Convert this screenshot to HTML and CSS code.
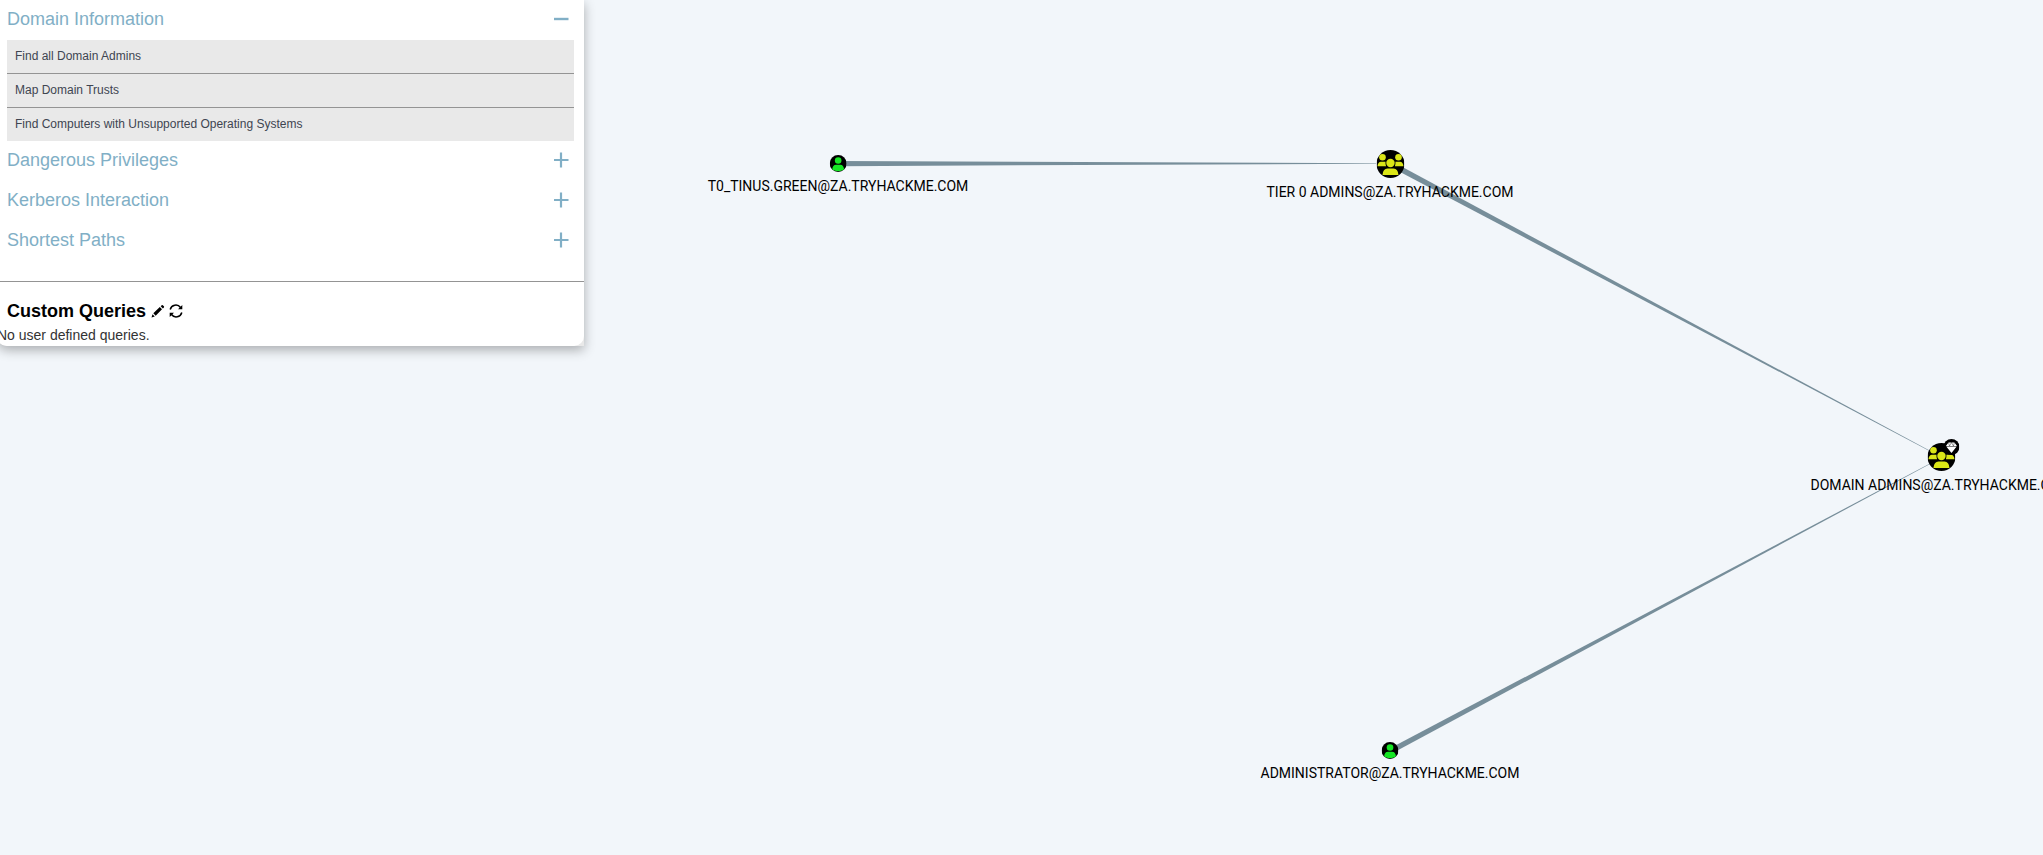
FILE: index.html
```html
<!DOCTYPE html>
<html lang="en">
<head>
<meta charset="utf-8">
<title>Domain graph</title>
<link rel="stylesheet" href="styles.css">
</head>
<body>
<svg class="defs" width="0" height="0" aria-hidden="true">
  <symbol id="user" viewBox="-10 -10 20 20">
    <circle r="10" fill="#000"/>
    <circle cy="-3.500" r="3.900" fill="#17e625"/>
    <path d="M-7 7.200Q-6.500 1.500-2.500 1.500H2.500Q6.500 1.500 7 7.200Q3.500 9 0 9Q-3.500 9-7 7.200Z" fill="#17e625"/>
  </symbol>
  <symbol id="group" viewBox="-14 -14 28 28">
    <circle r="14" fill="#000"/>
    <g fill="#dbe617">
      <circle cx="-8" cy="-6.800" r="3.300"/>
      <circle cx="8" cy="-6.800" r="3.300"/>
      <path d="M-13 2.300Q-12.500-2.300-9.500-2.300H-5Q-5.200 0-4.400 2.300ZM13 2.300Q12.500-2.300 9.500-2.300H5Q5.200 0 4.400 2.300Z"/>
      <circle cy="-1" r="4.200"/>
      <path d="M-8 11Q-7.500 4.500-3 4.500H3Q7.500 4.500 8 11Z"/>
    </g>
  </symbol>
  <symbol id="gem" viewBox="-8 -8 16 16">
    <circle r="8" fill="#000"/>
    <path d="M-3-4.500H3L5.500-1H-5.500ZM-5.200-.4H5.200L0 6Z" fill="#fff"/>
    <path d="M-3-4.500-2-1 0-4.500 2-1 3-4.500" fill="none" stroke="#000" stroke-width=".4"/>
  </symbol>
  <symbol id="plus" viewBox="0 0 16 16"><path d="M8 .5V15.500M1 8H15.500" fill="none" stroke="currentColor" stroke-width="2.200"/></symbol>
  <symbol id="minus" viewBox="0 0 16 16"><path d="M1 8H15.500" fill="none" stroke="currentColor" stroke-width="2.400"/></symbol>
</svg>

<main class="graph">
  <svg class="edges" aria-hidden="true">
    <g fill="#778e9a">
      <path d="M838 161L1376 163.200V163.700L838 166.200Z"/>
      <path d="M1391.300 161.100L1930 450.800L1929.900 451.200L1388.700 165.900Z"/>
      <path d="M1388.700 749L1929.900 463.600L1930 464L1391.300 753.800Z"/>
    </g>
  </svg>
  <div class="node user t0"><svg class="icon"><use href="#user"/></svg><span>T0_TINUS.GREEN@ZA.TRYHACKME.COM</span></div>
  <div class="node group tier"><svg class="icon"><use href="#group"/></svg><span>TIER 0 ADMINS@ZA.TRYHACKME.COM</span></div>
  <div class="node group domain"><svg class="icon"><use href="#group"/></svg><svg class="badge"><use href="#gem"/></svg><span>DOMAIN ADMINS@ZA.TRYHACKME.COM</span></div>
  <div class="node user admin"><svg class="icon"><use href="#user"/></svg><span>ADMINISTRATOR@ZA.TRYHACKME.COM</span></div>
</main>

<aside class="panel">
  <div class="panel-body">
    <section class="queries">
      <button class="category" type="button" aria-expanded="true">Domain Information<svg><use href="#minus"/></svg></button>
      <div class="query-list">
        <a class="query" href="#admins">Find all Domain Admins</a>
        <a class="query" href="#trusts">Map Domain Trusts</a>
        <a class="query" href="#unsupported">Find Computers with Unsupported Operating Systems</a>
      </div>
      <button class="category" type="button" aria-expanded="false">Dangerous Privileges<svg><use href="#plus"/></svg></button>
      <button class="category" type="button" aria-expanded="false">Kerberos Interaction<svg><use href="#plus"/></svg></button>
      <button class="category" type="button" aria-expanded="false">Shortest Paths<svg><use href="#plus"/></svg></button>
    </section>
    <section class="custom">
      <header class="custom-head">
        <h3>Custom Queries</h3>
        <button class="tool" type="button" aria-label="Edit queries"><svg viewBox="0 0 14 14"><path d="M.5 13.500L1.500 10.200L3.800 12.500ZM2.300 9.300L8.800 3L11 5.200L4.700 11.700ZM9.700 2.200L10.700 1.200Q11.200.7 11.800 1.200L12.900 2.300Q13.400 2.900 12.900 3.400L11.900 4.400Z"/></svg></button>
        <button class="tool" type="button" aria-label="Refresh queries"><svg viewBox="0 0 14 14"><path d="M1.200 5.500A5.800 5.800 0 0 1 11.500 3.500M12.800 8.500A5.800 5.800 0 0 1 2.500 10.500" fill="none" stroke="#000" stroke-width="1.500"/><path d="M13.300 1V5.200H9ZM.7 13V8.800H5Z"/></svg></button>
      </header>
      <p class="empty">No user defined queries.</p>
    </section>
  </div>
</aside>
</body>
</html>
```
FILE: styles.css
```css
* { box-sizing: border-box; }
body {
  margin: 0;
  min-height: 100vh;
  overflow: hidden;
  background: #f2f6fa;
  font-family: "Liberation Sans", Arial, sans-serif;
}
button { border: 0; padding: 0; background: none; font: inherit; cursor: pointer; }
.defs { position: absolute; }

.graph { position: absolute; inset: 0; overflow: hidden; }
.edges { position: absolute; width: 100%; height: 100%; }
.node {
  position: absolute;
  display: flex;
  flex-direction: column;
  align-items: center;
  transform: translateX(-50%);
  font: 14px/16px Roboto, sans-serif;
  color: #000;
  white-space: nowrap;
}
.node { gap: 6px; }
.user .icon { width: 17px; height: 17px; }
.group .icon { width: 28px; height: 28px; }
.badge { position: absolute; top: -4px; left: calc(50% + 2px); width: 16px; height: 16px; }
.t0 { left: 838px; top: 155px; }
.tier { left: 1390px; top: 150px; }
.domain { left: 1941px; top: 443px; }
.admin { left: 1390px; top: 742px; }

.panel {
  position: relative;
  width: 587px;
  margin-left: -3px;
  background: #e9e9e9;
  box-shadow: 0 4px 12px rgba(0, 0, 0, .3);
  border-radius: 0 0 0 10px;
}
.panel-body { background: #fff; border-radius: 0 0 10px 10px; }
.queries { padding: 0 10px 20px; border-bottom: 1px solid #949494; }
.category {
  display: flex;
  align-items: center;
  justify-content: space-between;
  width: 100%;
  height: 40px;
  padding: 0 5px 2px 0;
  color: #81afc6;
  font-size: 18px;
}
.category svg { width: 16px; height: 16px; }
.query-list { background: #e9e9e9; }
.query {
  display: block;
  padding: 0 8px;
  color: #3e4551;
  font-size: 12px;
  line-height: 33px;
  text-decoration: none;
}
.query + .query { border-top: 1px solid #949494; }
.custom { padding-top: 15px; }
.custom-head { display: flex; align-items: center; gap: 4px; height: 28px; padding-left: 10px; }
.custom-head h3 { margin: 0 1px 0 0; font-size: 18px; line-height: 28px; }
.tool { width: 14px; height: 14px; }
.tool svg { display: block; width: 14px; height: 14px; }
.empty { margin: 0; color: #333; font-size: 14px; line-height: 21px; }
```
